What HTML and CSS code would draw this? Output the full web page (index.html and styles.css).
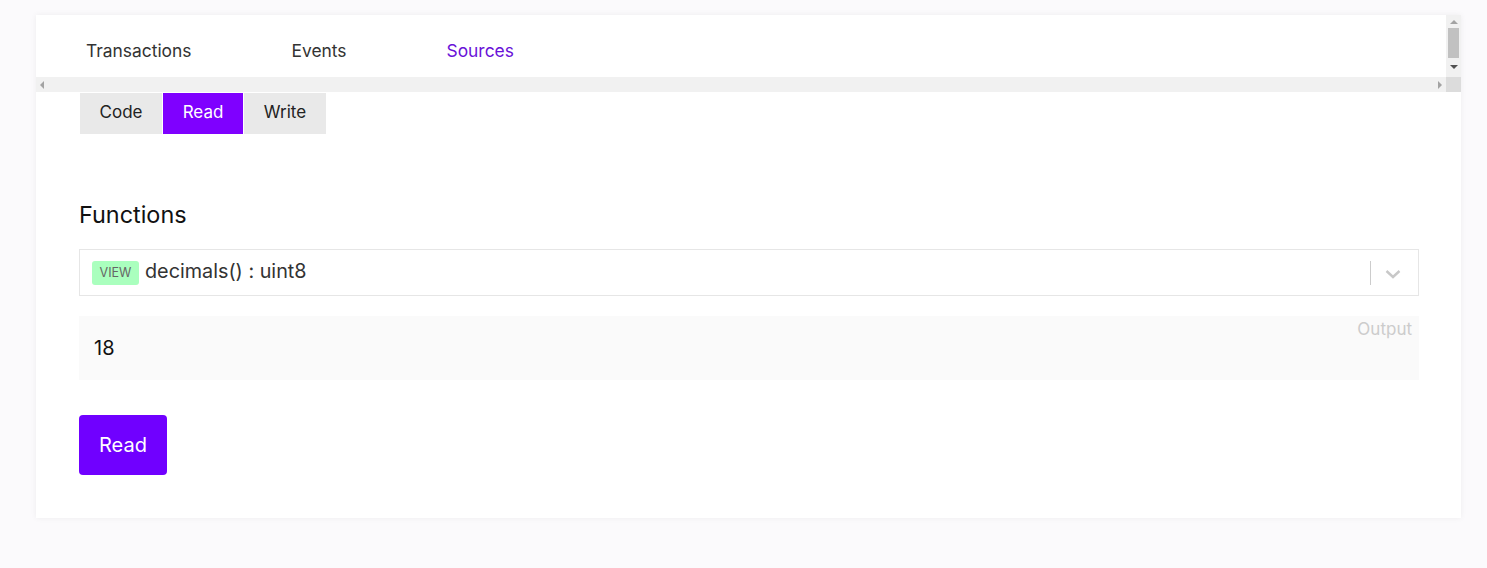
FILE: index.html
```html
<!DOCTYPE html>
<html lang="en">
<head>
<meta charset="utf-8">
<title>Contract</title>
<link rel="stylesheet" href="styles.css">
</head>
<body>
<div class="card">
  <div class="tabbox">
    <nav class="tabs">
      <span class="tab">Transactions</span>
      <span class="tab">Events</span>
      <span class="tab active">Sources</span>
    </nav>
    <div class="vscroll">
      <span class="arrow up"></span>
      <span class="thumb"></span>
      <span class="arrow down"></span>
    </div>
    <div class="hscroll">
      <span class="arrow left"></span>
      <span class="arrow right"></span>
    </div>
    <div class="corner"></div>
  </div>
  <div class="content">
    <div class="subtabs">
      <span class="subtab">Code</span>
      <span class="subtab on">Read</span>
      <span class="subtab">Write</span>
    </div>
    <h2 class="title">Functions</h2>
    <div class="select">
      <span class="badge">VIEW</span>
      <span class="fn">decimals() : uint8</span>
      <span class="sep"></span>
      <svg class="chev" width="16" height="10" viewBox="0 0 16 10"><path d="M1.5 2 L8 8 L14.5 2" fill="none" stroke="#c8c8c8" stroke-width="2.4"/></svg>
    </div>
    <div class="output">
      <span class="value">18</span>
      <span class="label">Output</span>
    </div>
    <button class="btn">Read</button>
  </div>
</div>
</body>
</html>
```
FILE: styles.css
```css
* { box-sizing: border-box; }
html, body { margin: 0; }
body {
  background: #fbfafc;
  font-family: Inter, "Noto Sans", sans-serif;
  padding: 15px 26px 50px 36px;
  color: #222;
}
.card {
  background: #fff;
  box-shadow: 0 0 6px rgba(0,0,0,0.06);
  padding-bottom: 43px;
}
.tabbox {
  display: grid;
  grid-template-columns: 1fr 15px;
  grid-template-rows: 62px 15px;
}
.tabs {
  display: flex;
  padding: 24px 0 0 0;
}
.tab {
  padding: 0 50px;
  font-size: 17.4px;
  line-height: 24px;
  color: #333;
}
.tab.active { color: #6a12d8; }
.vscroll {
  background: #f1f1f1;
  display: flex;
  flex-direction: column;
  align-items: center;
  padding-top: 5px;
}
.thumb {
  width: 11px;
  height: 30px;
  background: #c1c1c1;
  margin: 4px 0 4px;
}
.arrow { width: 0; height: 0; border: 4px solid transparent; }
.arrow.up { border-bottom: 4px solid #a3a3a3; border-top-width: 0; }
.arrow.down { border-top: 4px solid #505050; border-bottom-width: 0; margin-top: 3px; }
.hscroll {
  background: #f1f1f1;
  display: flex;
  align-items: center;
  justify-content: space-between;
  padding: 0 4px 0 4px;
}
.arrow.left { border-right: 4px solid #a3a3a3; border-left-width: 0; }
.arrow.right { border-left: 4px solid #a3a3a3; border-right-width: 0; }
.corner { background: #dcdcdc; }
.content {
  padding: 1px 42px 0 43px;
}
.subtabs {
  display: flex;
  gap: 1px;
  margin-left: 1px;
}
.subtab {
  height: 41px;
  width: 82px;
  display: flex;
  align-items: center;
  justify-content: center;
  padding-bottom: 3px;
  background: #e9e9e9;
  font-size: 17px;
  color: #222;
}
.subtab.on { background: #7f00ff; color: #fff; width: 80px; }
.title {
  margin: 67px 0 0;
  font-size: 23.4px;
  font-weight: 400;
  line-height: 28px;
  color: #111;
}
.select {
  margin-top: 20px;
  height: 47px;
  border: 1px solid #e6e6e6;
  display: flex;
  align-items: center;
  padding: 0 17px 0 12px;
}
.badge {
  width: 47px;
  height: 24px;
  border-radius: 3px;
  background: #aaffbe;
  color: #666;
  font-size: 12.5px;
  display: flex;
  align-items: center;
  justify-content: center;
}
.fn {
  margin-left: 6px;
  font-size: 19.8px;
  color: #333;
  flex: 1;
  padding-bottom: 3px;
}
.sep {
  width: 1px;
  height: 24px;
  background: #cccccc;
  margin-right: 14px;
}
.chev { display: block; margin-top: 2px; }
.output {
  margin-top: 20px;
  height: 64px;
  background: #fafafa;
  display: flex;
  justify-content: space-between;
  padding: 0 7px 0 15px;
}
.value {
  font-size: 20px;
  color: #111;
  align-self: center;
}
.label {
  font-size: 17px;
  color: #cccccc;
  margin-top: 3px;
}
.btn {
  margin-top: 35px;
  display: block;
  width: 88px;
  height: 60px;
  border: 0;
  border-radius: 4px;
  background: #7000ff;
  color: #fff;
  font-family: Inter, "Noto Sans", sans-serif;
  font-size: 20px;
  padding: 0;
}
```
